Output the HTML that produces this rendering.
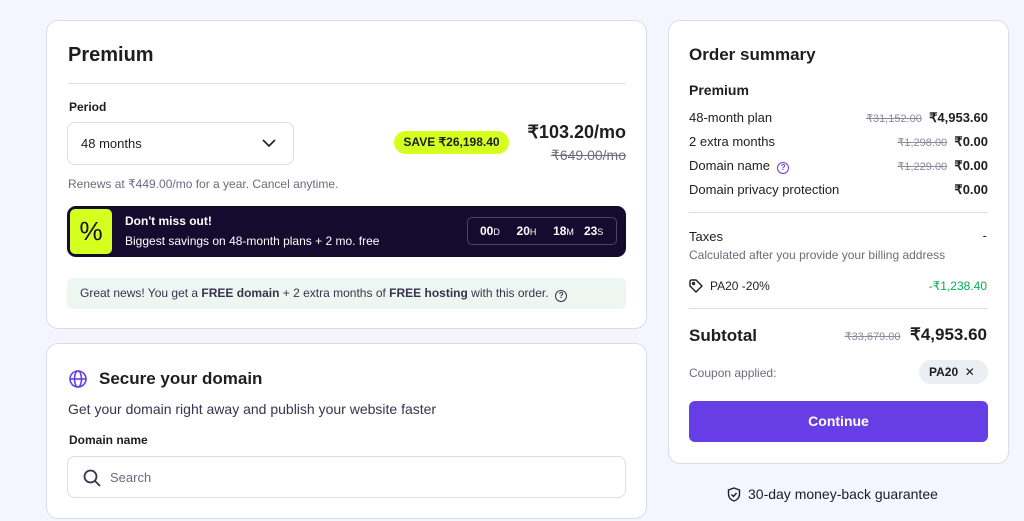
<!DOCTYPE html>
<html><head><meta charset="utf-8"><style>
*{box-sizing:border-box;margin:0;padding:0}
body{width:1024px;height:521px;overflow:hidden;background:#f4f5ff;font-family:"Liberation Sans",sans-serif;color:#2f1c6a;position:relative}
.card{position:absolute;background:#fff;border:1px solid #dadce6;border-radius:12px}
.abs{position:absolute}
.strike{text-decoration:line-through;color:#8c8a9c}
.b{font-weight:bold}
</style></head><body>
<div class="card" style="left:46px;top:20px;width:601px;height:309px">
 <div class="abs b" style="left:21px;top:23px;font-size:20px;color:#1d1e20">Premium</div>
 <div class="abs" style="left:21px;top:62px;width:558px;height:1px;background:#dadce6"></div>
 <div class="abs b" style="left:22px;top:79px;font-size:12px;color:#1d1e20">Period</div>
 <div class="abs" style="left:20px;top:101px;width:227px;height:43px;border:1px solid #dadce6;border-radius:8px">
  <span class="abs" style="left:13px;top:13px;font-size:13px;color:#1d1e20">48 months</span>
  <svg class="abs" style="left:193px;top:14px" width="16" height="12" viewBox="0 0 16 12"><path d="M2 3l6 6 6-6" fill="none" stroke="#1d1e20" stroke-width="1.6"/></svg>
 </div>
 <div class="abs b" style="left:347px;top:110px;width:115px;height:23px;background:#d5ff1f;border-radius:12px;font-size:12px;color:#1d1e20;text-align:center;line-height:23px">SAVE ₹26,198.40</div>
 <div class="abs b" style="left:460px;top:101px;width:119px;text-align:right;font-size:18px;color:#1d1e20">₹103.20/mo</div>
 <div class="abs strike" style="left:460px;top:126px;width:119px;text-align:right;font-size:14px;color:#6d6b7c">₹649.00/mo</div>
 <div class="abs" style="left:21px;top:156px;font-size:12px;color:#6d6b7c">Renews at ₹449.00/mo for a year. Cancel anytime.</div>
 <div class="abs" style="left:20px;top:185px;width:559px;height:51px;background:#140c2f;border-radius:9px">
  <div class="abs" style="left:3px;top:3px;width:42px;height:45px;background:#d5ff1f;border-radius:5px;font-size:26px;text-align:center;line-height:45px;color:#140c2f">%</div>
  <div class="abs b" style="left:58px;top:8px;font-size:12px;color:#fff">Don't miss out!</div>
  <div class="abs" style="left:58px;top:28px;font-size:12px;color:#fff">Biggest savings on 48-month plans + 2 mo. free</div>
  <div class="abs" style="left:400px;top:11px;width:150px;height:28px;border:1px solid #4a4560;border-radius:5px;color:#fff;font-size:12px;line-height:26px;padding-left:12px;white-space:nowrap;word-spacing:0">
   <b>00</b><span style="font-size:9px">D</span>&nbsp;&nbsp;&nbsp;&nbsp;&nbsp;<b>20</b><span style="font-size:9px">H</span>&nbsp;&nbsp;&nbsp;&nbsp;&nbsp;<b>18</b><span style="font-size:9px">M</span>&nbsp;&nbsp;&nbsp;<b>23</b><span style="font-size:9px">S</span></div>
 </div>
 <div class="abs" style="left:20px;top:257px;width:559px;height:31px;background:#eef6f1;border-radius:6px;font-size:12px;color:#36344d;line-height:31px;padding-left:13px">Great news! You get a <b>FREE domain</b> + 2 extra months of <b>FREE hosting</b> with this order. &nbsp;<span style="display:inline-block;width:12px;height:12px;border:1.3px solid #36344d;border-radius:50%;font-size:8px;line-height:10px;text-align:center;vertical-align:-1px" class="b">?</span></div>
</div>
<div class="card" style="left:46px;top:343px;width:601px;height:176px">
 <svg class="abs" style="left:21px;top:25px" width="20" height="20" viewBox="0 0 20 20" fill="none" stroke="#673de6" stroke-width="1.6"><circle cx="10" cy="10" r="8"/><ellipse cx="10" cy="10" rx="3.5" ry="8"/><path d="M2 10h16"/></svg>
 <div class="abs b" style="left:52px;top:25px;font-size:17px;color:#1d1e20">Secure your domain</div>
 <div class="abs" style="left:21px;top:57px;font-size:14px;color:#36344d">Get your domain right away and publish your website faster</div>
 <div class="abs b" style="left:22px;top:89px;font-size:12px;color:#1d1e20">Domain name</div>
 <div class="abs" style="left:20px;top:112px;width:559px;height:42px;border:1px solid #dadce6;border-radius:8px">
  <svg class="abs" style="left:14px;top:11px" width="20" height="20" viewBox="0 0 20 20" fill="none" stroke="#36344d" stroke-width="1.8"><circle cx="8.5" cy="8.5" r="6"/><path d="M13 13l5 5"/></svg>
  <span class="abs" style="left:42px;top:13px;font-size:13px;color:#6d6b7c">Search</span>
 </div>
</div>
<div class="card" style="left:668px;top:20px;width:341px;height:444px">
 <div class="abs b" style="left:20px;top:24px;font-size:17px;color:#1d1e20">Order summary</div>
 <div class="abs b" style="left:20px;top:61px;font-size:14px;color:#1d1e20">Premium</div>
 <div style="position:absolute;left:20px;top:89px;width:299px;font-size:13px;color:#1d1e20">
  <div style="display:flex;justify-content:space-between;height:24px"><span>48-month plan</span><span><span class="strike" style="font-size:11px">₹31,152.00</span>&nbsp; <b style="font-size:13px">₹4,953.60</b></span></div>
  <div style="display:flex;justify-content:space-between;height:24px"><span>2 extra months</span><span><span class="strike" style="font-size:11px">₹1,298.00</span>&nbsp; <b style="font-size:13px">₹0.00</b></span></div>
  <div style="display:flex;justify-content:space-between;height:24px"><span>Domain name &nbsp;<span style="display:inline-block;width:12px;height:12px;border:1.3px solid #673de6;border-radius:50%;font-size:8px;line-height:10px;text-align:center;color:#673de6" class="b">?</span></span><span><span class="strike" style="font-size:11px">₹1,229.00</span>&nbsp; <b style="font-size:13px">₹0.00</b></span></div>
  <div style="display:flex;justify-content:space-between;height:24px"><span>Domain privacy protection</span><b style="font-size:13px">₹0.00</b></div>
 </div>
 <div class="abs" style="left:20px;top:191px;width:299px;height:1px;background:#dadce6"></div>
 <div class="abs" style="left:20px;top:208px;font-size:13px;color:#1d1e20">Taxes</div>
 <div class="abs" style="right:21px;top:207px;font-size:13px;color:#1d1e20">-</div>
 <div class="abs" style="left:20px;top:227px;font-size:12px;color:#6d6b7c">Calculated after you provide your billing address</div>
 <svg class="abs" style="left:20px;top:258px" width="14" height="14" viewBox="0 0 14 14" fill="none" stroke="#1d1e20" stroke-width="1.4"><path d="M1 2v5l6 6 6-6-6-6H2z"/><circle cx="4.5" cy="4.5" r="1"/></svg>
 <div class="abs" style="left:41px;top:258px;font-size:12px;color:#1d1e20">PA20 -20%</div>
 <div class="abs" style="right:21px;top:258px;font-size:12px;color:#00b14f">-₹1,238.40</div>
 <div class="abs" style="left:20px;top:287px;width:299px;height:1px;background:#dadce6"></div>
 <div class="abs b" style="left:20px;top:305px;font-size:17px;color:#1d1e20">Subtotal</div>
 <div class="abs" style="right:21px;top:304px;font-size:17px;color:#1d1e20"><span class="strike" style="font-size:11px">₹33,679.00</span>&nbsp; <b>₹4,953.60</b></div>
 <div class="abs" style="left:20px;top:345px;font-size:12px;color:#6d6b7c">Coupon applied:</div>
 <div class="abs b" style="left:250px;top:339px;width:69px;height:24px;background:#ebeef3;border-radius:12px;font-size:12px;color:#1d1e20;line-height:24px;padding-left:10px">PA20 &nbsp;<span style="font-weight:normal">✕</span></div>
 <div class="abs b" style="left:20px;top:380px;width:299px;height:41px;background:#673de6;border-radius:6px;color:#fff;font-size:14px;text-align:center;line-height:41px">Continue</div>
</div>
<svg class="abs" style="left:727px;top:487px" width="14" height="15" viewBox="0 0 14 15" fill="none" stroke="#1d1e20" stroke-width="1.4"><path d="M7 1l5.5 2v4c0 3.5-2.5 6-5.5 7C4 13 1.5 10.5 1.5 7V3z"/><path d="M4.5 7.5l2 2 3-3.5"/></svg>
<div class="abs" style="left:748px;top:486px;font-size:14px;color:#1d1e20">30-day money-back guarantee</div>
</body></html>
